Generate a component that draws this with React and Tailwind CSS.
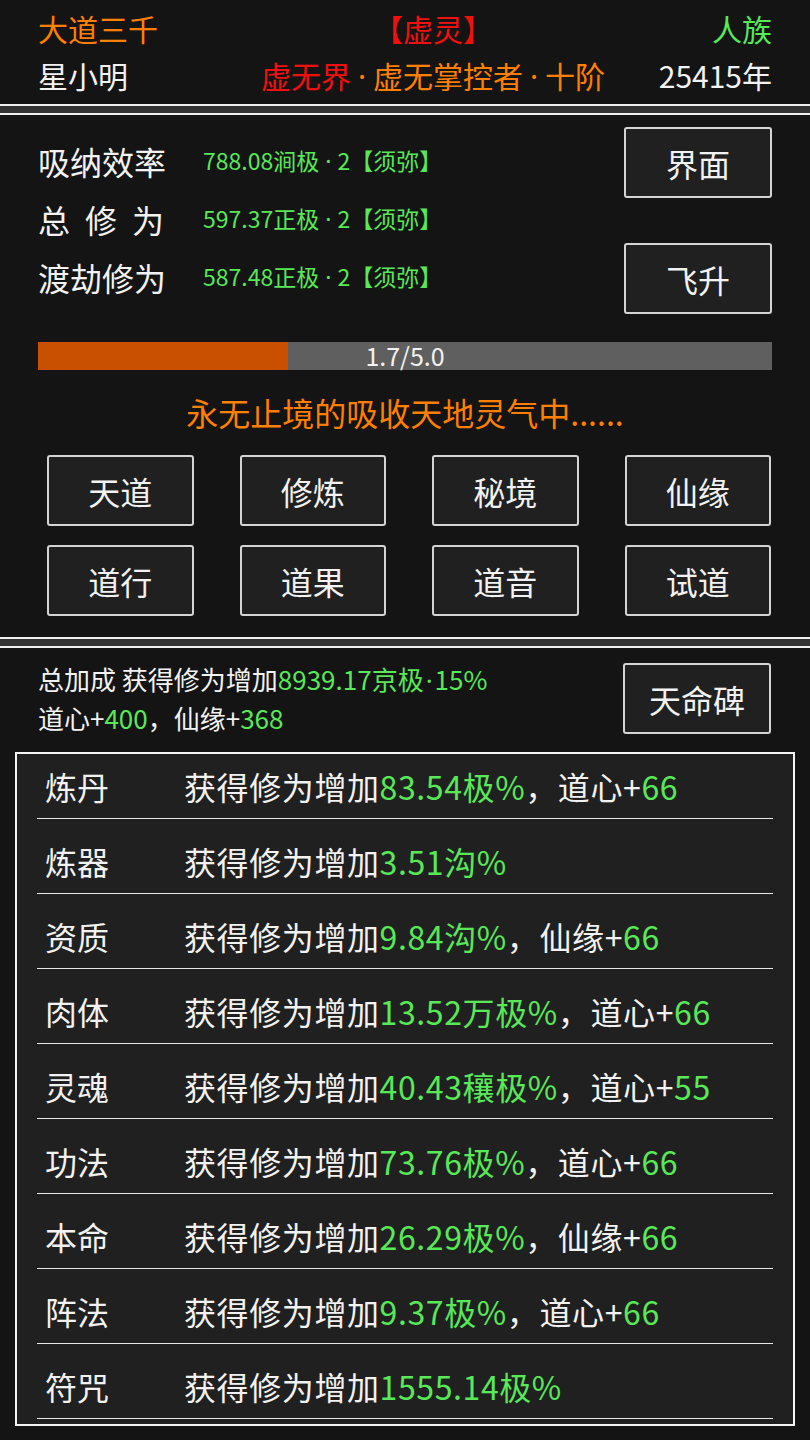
import React from 'react';

const font = { fontFamily: '"Noto Sans CJK SC", "Noto Sans", sans-serif' };

const ORANGE = 'text-[#ff7f00]';
const RED = 'text-[#f01010]';
const GREEN = 'text-[#58e858]';

// narrow middle dot (CJK font renders it full width), with a bit of air around it
const withDots = (text, gap = 'mx-[6px]') =>
  text.split('·').map((part, i) => (
    <React.Fragment key={i}>
      {i > 0 && <span className={`font-['Noto_Sans',sans-serif] ${gap}`}>·</span>}
      {part}
    </React.Fragment>
  ));

const stats = [
  { label: '吸纳效率', value: '788.08涧极·2【须弥】' },
  { label: '总修为', value: '597.37正极·2【须弥】', spread: true },
  { label: '渡劫修为', value: '587.48正极·2【须弥】' },
];

const actions = ['天道', '修炼', '秘境', '仙缘', '道行', '道果', '道音', '试道'];

const bonuses = [
  { name: '炼丹', value: '83.54极%', extra: ['道心', '66'] },
  { name: '炼器', value: '3.51沟%' },
  { name: '资质', value: '9.84沟%', extra: ['仙缘', '66'] },
  { name: '肉体', value: '13.52万极%', extra: ['道心', '66'] },
  { name: '灵魂', value: '40.43穰极%', extra: ['道心', '55'] },
  { name: '功法', value: '73.76极%', extra: ['道心', '66'] },
  { name: '本命', value: '26.29极%', extra: ['仙缘', '66'] },
  { name: '阵法', value: '9.37极%', extra: ['道心', '66'] },
  { name: '符咒', value: '1555.14极%' },
];

const Box = ({ children, className = '' }) => (
  <button
    type="button"
    className={`h-[71px] flex items-center justify-center bg-[#202020] border-2 border-[#d4d4d4] rounded-[3px] text-[32px] text-[#f2f2f2] ${className}`}
  >
    {children}
  </button>
);

const Divider = () => (
  <div className="h-[11px] bg-[#333333] border-y-2 border-[#f0f0f0]" />
);

export default function App() {
  const progress = 1.7 / 5.0;

  return (
    <div className="w-[810px] h-[1440px] bg-[#141414] text-[#f2f2f2] overflow-hidden" style={font}>
      {/* header */}
      <div className="h-[104px] px-[38px] pt-[7px] flex flex-col gap-[5px] text-[30px] leading-[42px]">
        <div className="grid grid-cols-[1fr_auto_1fr]">
          <span className={ORANGE}>大道三千</span>
          <span className={`${RED} pl-[56px]`}>【虚灵】</span>
          <span className={`${GREEN} justify-self-end`}>人族</span>
        </div>
        <div className="grid grid-cols-[1fr_auto_1fr]">
          <span>星小明</span>
          <span className="pl-[56px] whitespace-nowrap">
            <span className={RED}>虚无界</span>
            <span className={ORANGE}>{withDots('·虚无掌控者·十阶', 'mx-[7px]')}</span>
          </span>
          <span className="justify-self-end">25415年</span>
        </div>
      </div>

      <Divider />

      {/* cultivation panel */}
      <div className="h-[522px] px-[38px] pt-[12px]">
        <div className="flex justify-between">
          <div className="pt-[5px]">
            {stats.map((s) => (
              <div key={s.label} className="h-[58px] flex items-center">
                {s.spread ? (
                  <span className="w-[130px] flex justify-between text-[32px] pr-[4px]">
                    {s.label.split('').map((c) => (
                      <span key={c}>{c}</span>
                    ))}
                  </span>
                ) : (
                  <span className="w-[130px] text-[32px] whitespace-nowrap">{s.label}</span>
                )}
                <span className={`ml-[35px] text-[23px] ${GREEN}`}>{withDots(s.value)}</span>
              </div>
            ))}
          </div>
          <div className="flex flex-col gap-[45px] w-[148px]">
            <Box>界面</Box>
            <Box>飞升</Box>
          </div>
        </div>

        <div className="mt-[28px] h-[28px] bg-[#5f5f5f] relative">
          <div className="h-full bg-[#c85000]" style={{ width: `${progress * 100}%` }} />
          <span className="absolute inset-0 flex items-center justify-center text-[25px] text-[#f2f2f2]">
            1.7/5.0
          </span>
        </div>

        <div className={`mt-[21px] text-center text-[32px] leading-[42px] ${ORANGE}`}>
          永无止境的吸收天地灵气中......
        </div>

        <div className="mt-[22px] pl-[9px] pr-[1px] grid grid-cols-4 gap-x-[46px] gap-y-[19px]">
          {actions.map((a) => (
            <Box key={a}>{a}</Box>
          ))}
        </div>
      </div>

      <Divider />

      {/* bonus panel */}
      <div className="px-[15px] pt-[15px] pb-[15px]">
        <div className="h-[71px] flex justify-between pl-[23px] pr-[24px]">
          <div className="-mt-[3px] text-[26px] leading-[38px]">
            <div>
              总加成 获得修为增加
              <span className={GREEN}>{withDots('8939.17京极·15%', 'mx-[2px]')}</span>
            </div>
            <div>
              道心+<span className={GREEN}>400</span>，仙缘+<span className={GREEN}>368</span>
            </div>
          </div>
          <Box className="w-[148px]">天命碑</Box>
        </div>

        <div className="mt-[18px] border-2 border-[#f4f4f4] bg-[#202020] pb-[5px]">
          <div className="mx-[20px]">
            {bonuses.map((b, i) => (
              <div
                key={b.name}
                className={`flex items-end pb-[9px] border-b border-[#e8e8e8] text-[32px] leading-[45px] ${i === 0 ? 'h-[65px]' : 'h-[75px]'}`}
              >
                <span className="pl-[8px] w-[147px]">{b.name}</span>
                <span className="whitespace-nowrap tracking-[0.6px]">
                  获得修为增加<span className={GREEN}>{b.value}</span>
                  {b.extra && (
                    <>
                      ，{b.extra[0]}+<span className={GREEN}>{b.extra[1]}</span>
                    </>
                  )}
                </span>
              </div>
            ))}
          </div>
        </div>
      </div>
    </div>
  );
}
